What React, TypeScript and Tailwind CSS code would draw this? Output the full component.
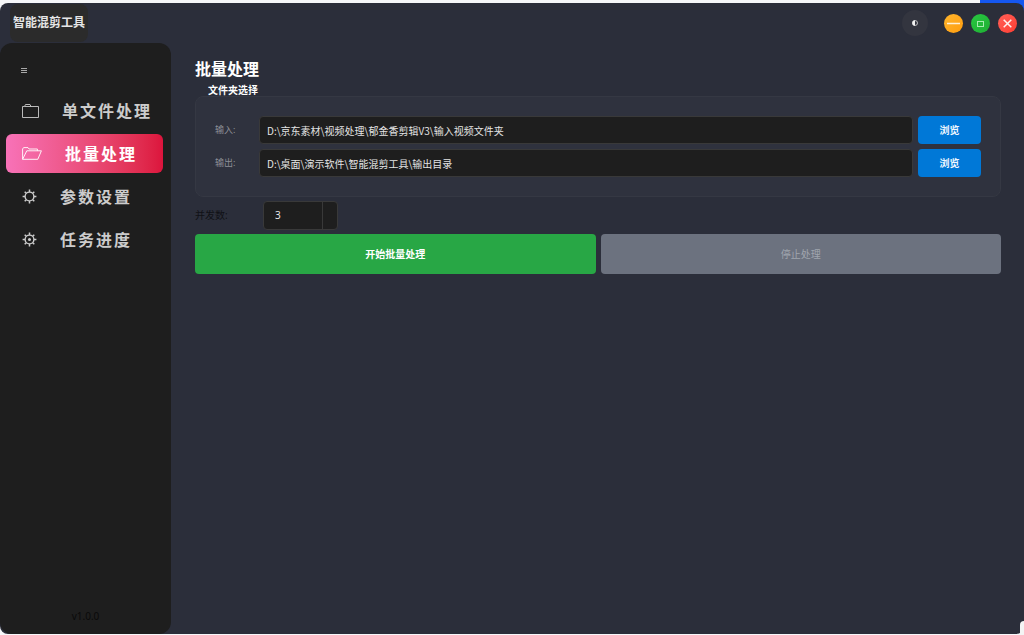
import type { ReactNode } from "react"
import clsx from "clsx"

function FolderIcon() {
  return (
    <svg width="17" height="14" viewBox="0 0 17 14" fill="none" stroke="currentColor" className="shrink-0">
      <path d="M0.5 13.5V2.5H2.5L3.5 0.5H8L9 2.5H16.5V13.5Z" strokeWidth="0.9" />
      <path d="M2.5 2.5H9" strokeWidth="0.9" />
    </svg>
  )
}

function FolderOpenIcon() {
  return (
    <svg
      width="20"
      height="13"
      viewBox="0 0 20 13"
      fill="none"
      stroke="currentColor"
      strokeWidth="0.9"
      strokeLinejoin="round"
      className="shrink-0"
    >
      <path d="M0.6 12.3V2L1.6 0.6H6L7 2H15.4V3.8" />
      <path d="M0.6 12.3L4.8 3.8H19.4L15.8 12.3Z" />
    </svg>
  )
}

function GearIcon({ dot = false }: { dot?: boolean }) {
  return (
    <svg width="15" height="15" viewBox="0 0 15 15" fill="none" stroke="currentColor" className="shrink-0">
      <circle cx="7.5" cy="7.5" r="4.4" strokeWidth="1.4" />
      <path
        d="M7.5 0.6V3M7.5 12V14.4M0.6 7.5H3M12 7.5H14.4M2.7 2.7L4.3 4.3M10.7 10.7L12.3 12.3M2.7 12.3L4.3 10.7M10.7 4.3L12.3 2.7"
        strokeWidth="1.5"
      />
      {dot && <circle cx="7.5" cy="7.5" r="1.5" fill="currentColor" stroke="none" />}
    </svg>
  )
}

const navItems: { label: string; icon: ReactNode; active?: boolean }[] = [
  { label: "单文件处理", icon: <FolderIcon /> },
  { label: "批量处理", icon: <FolderOpenIcon />, active: true },
  { label: "参数设置", icon: <GearIcon /> },
  { label: "任务进度", icon: <GearIcon dot /> },
]

const folders = [
  { id: "input-dir", label: "输入:", path: "D:\\京东素材\\视频处理\\郁金香剪辑V3\\输入视频文件夹" },
  { id: "output-dir", label: "输出:", path: "D:\\桌面\\演示软件\\智能混剪工具\\输出目录" },
]

function TitleBar() {
  return (
    <header className="flex h-10 items-center justify-between pr-[7px] pl-[10px]">
      <h1 className="flex h-[38px] items-center rounded-lg bg-[#2b2b2b] px-[3px] text-[12px] font-bold text-[#e6e6e6]">
        智能混剪工具
      </h1>
      <div className="flex items-center gap-2">
        <button
          type="button"
          aria-label="切换主题"
          className="mr-2 flex size-[26px] items-center justify-center rounded-full bg-[#33353f] text-[#f2f2f2]"
        >
          <svg width="6" height="6" viewBox="0 0 6 6">
            <circle cx="3" cy="3" r="2.5" fill="none" stroke="currentColor" strokeWidth="0.7" />
            <path d="M3 0.3A2.7 2.7 0 0 0 3 5.7Z" fill="currentColor" />
          </svg>
        </button>
        <button
          type="button"
          aria-label="最小化"
          className="flex size-[19px] items-center justify-center rounded-full bg-linear-to-br from-[#ffb52b] to-[#ff9d0a] text-[#fff0d6]"
        >
          <svg width="13" height="3" viewBox="0 0 13 3">
            <path d="M0 1.5H13" stroke="currentColor" strokeWidth="1.6" />
          </svg>
        </button>
        <button
          type="button"
          aria-label="最大化"
          className="flex size-[19px] items-center justify-center rounded-full bg-linear-to-br from-[#28c840] to-[#1eae34] text-[#a6ecb0]"
        >
          <svg width="7" height="9" viewBox="0 0 7 9">
            <rect x="0.5" y="2.5" width="6" height="5" fill="none" stroke="currentColor" />
          </svg>
        </button>
        <button
          type="button"
          aria-label="关闭"
          className="flex size-[19px] items-center justify-center rounded-full bg-linear-to-br from-[#ff5f57] to-[#ff3b30] text-[#fff0ee]"
        >
          <svg width="9" height="9" viewBox="0 0 9 9">
            <path d="M0.7 0.7L8.3 8.3M8.3 0.7L0.7 8.3" stroke="currentColor" strokeWidth="1.5" />
          </svg>
        </button>
      </div>
    </header>
  )
}

function Sidebar() {
  return (
    <aside className="flex w-[171px] shrink-0 flex-col rounded-xl bg-[#1e1e1e] px-[6px] pt-4 pb-3">
      <button type="button" aria-label="折叠菜单" className="flex h-6 w-9 items-center justify-center text-[#b8b8b8]">
        <svg width="6" height="6" viewBox="0 0 6 6">
          <path d="M0 0.5H6M0 2.5H6M0 4.5H6" stroke="currentColor" strokeWidth="0.9" />
        </svg>
      </button>
      <nav className="mt-2 mr-[2px] flex flex-col gap-1">
        {navItems.map((item) => (
          <button
            key={item.label}
            type="button"
            className={clsx(
              "flex h-[39px] items-center gap-[23px] rounded-md pl-4 text-[16px] font-bold tracking-[2px] whitespace-nowrap",
              item.active ? "bg-linear-to-r from-[#f872b8] to-[#dc143c] text-white" : "text-[#cccccc]"
            )}
          >
            {item.icon}
            {item.label}
          </button>
        ))}
      </nav>
      <p className="mt-auto text-center text-[10px] leading-3 text-[#0a0a0a]">v1.0.0</p>
    </aside>
  )
}

function FolderPicker() {
  return (
    <section aria-labelledby="folder-title">
      <h3 id="folder-title" className="pl-[13px] text-[10px] leading-3 font-bold text-white">
        文件夹选择
      </h3>
      <div className="flex flex-col gap-[5px] rounded-lg border border-[#353843] bg-[#2f323e] p-[19px]">
        {folders.map((folder) => (
          <div key={folder.id} className="flex items-center">
            <label htmlFor={folder.id} className="w-11 shrink-0 text-[#8d8f96]">
              {folder.label}
            </label>
            <input
              id={folder.id}
              type="text"
              defaultValue={folder.path}
              className="h-7 min-w-0 flex-1 rounded-sm border border-[#393939] bg-[#1e1e1e] px-[7px] font-['Noto_Sans_CJK_SC',sans-serif] text-[10px] text-[#e4e4e4]"
            />
            <button
              type="button"
              className="ml-[5px] h-7 w-[63px] rounded-sm bg-[#0078d7] text-[10px] font-bold text-[#f0f7ff]"
            >
              浏览
            </button>
          </div>
        ))}
      </div>
    </section>
  )
}

export default function App() {
  return (
    <div className="relative flex min-h-screen flex-col bg-[#f6f7f9] pt-[3px] pb-px font-['Noto_Sans','Noto_Sans_CJK_SC',sans-serif] text-[9px]">
      <div className="absolute top-0 right-0 h-4 w-11 rounded-bl-lg bg-[#1557f0]" />

      <div className="relative flex flex-1 flex-col overflow-hidden rounded-lg bg-[#2b2e3a]">
        <TitleBar />
        <div className="flex flex-1">
          <Sidebar />
          <main className="min-w-0 flex-1 pt-4 pr-[23px] pl-6">
            <h2 className="mb-[5px] text-[16px] leading-5 font-bold text-white">批量处理</h2>
            <FolderPicker />
            <div className="mt-1 flex items-center">
              <label htmlFor="workers" className="w-[68px] text-[10px] text-[#101116]">
                并发数:
              </label>
              <div className="flex h-[29px] w-[75px] overflow-hidden rounded-sm border border-[#393939] bg-[#1e1e1e]">
                <input
                  id="workers"
                  type="text"
                  inputMode="numeric"
                  defaultValue="3"
                  className="w-[59px] border-r border-[#393939] px-[11px] text-[10px] text-[#e4e4e4]"
                />
              </div>
            </div>
            <div className="mt-1 grid grid-cols-2 gap-[5px] text-[10px]">
              <button type="button" className="h-10 rounded-sm bg-[#28a745] font-bold text-white">
                开始批量处理
              </button>
              <button type="button" disabled className="h-10 rounded-sm bg-[#6c727f] text-[#a0a5ae]">
                停止处理
              </button>
            </div>
          </main>
        </div>
      </div>

      <div className="absolute right-0 bottom-0 h-[14px] w-1 rounded-tl-sm bg-[#f4f4f4]" />
    </div>
  )
}
